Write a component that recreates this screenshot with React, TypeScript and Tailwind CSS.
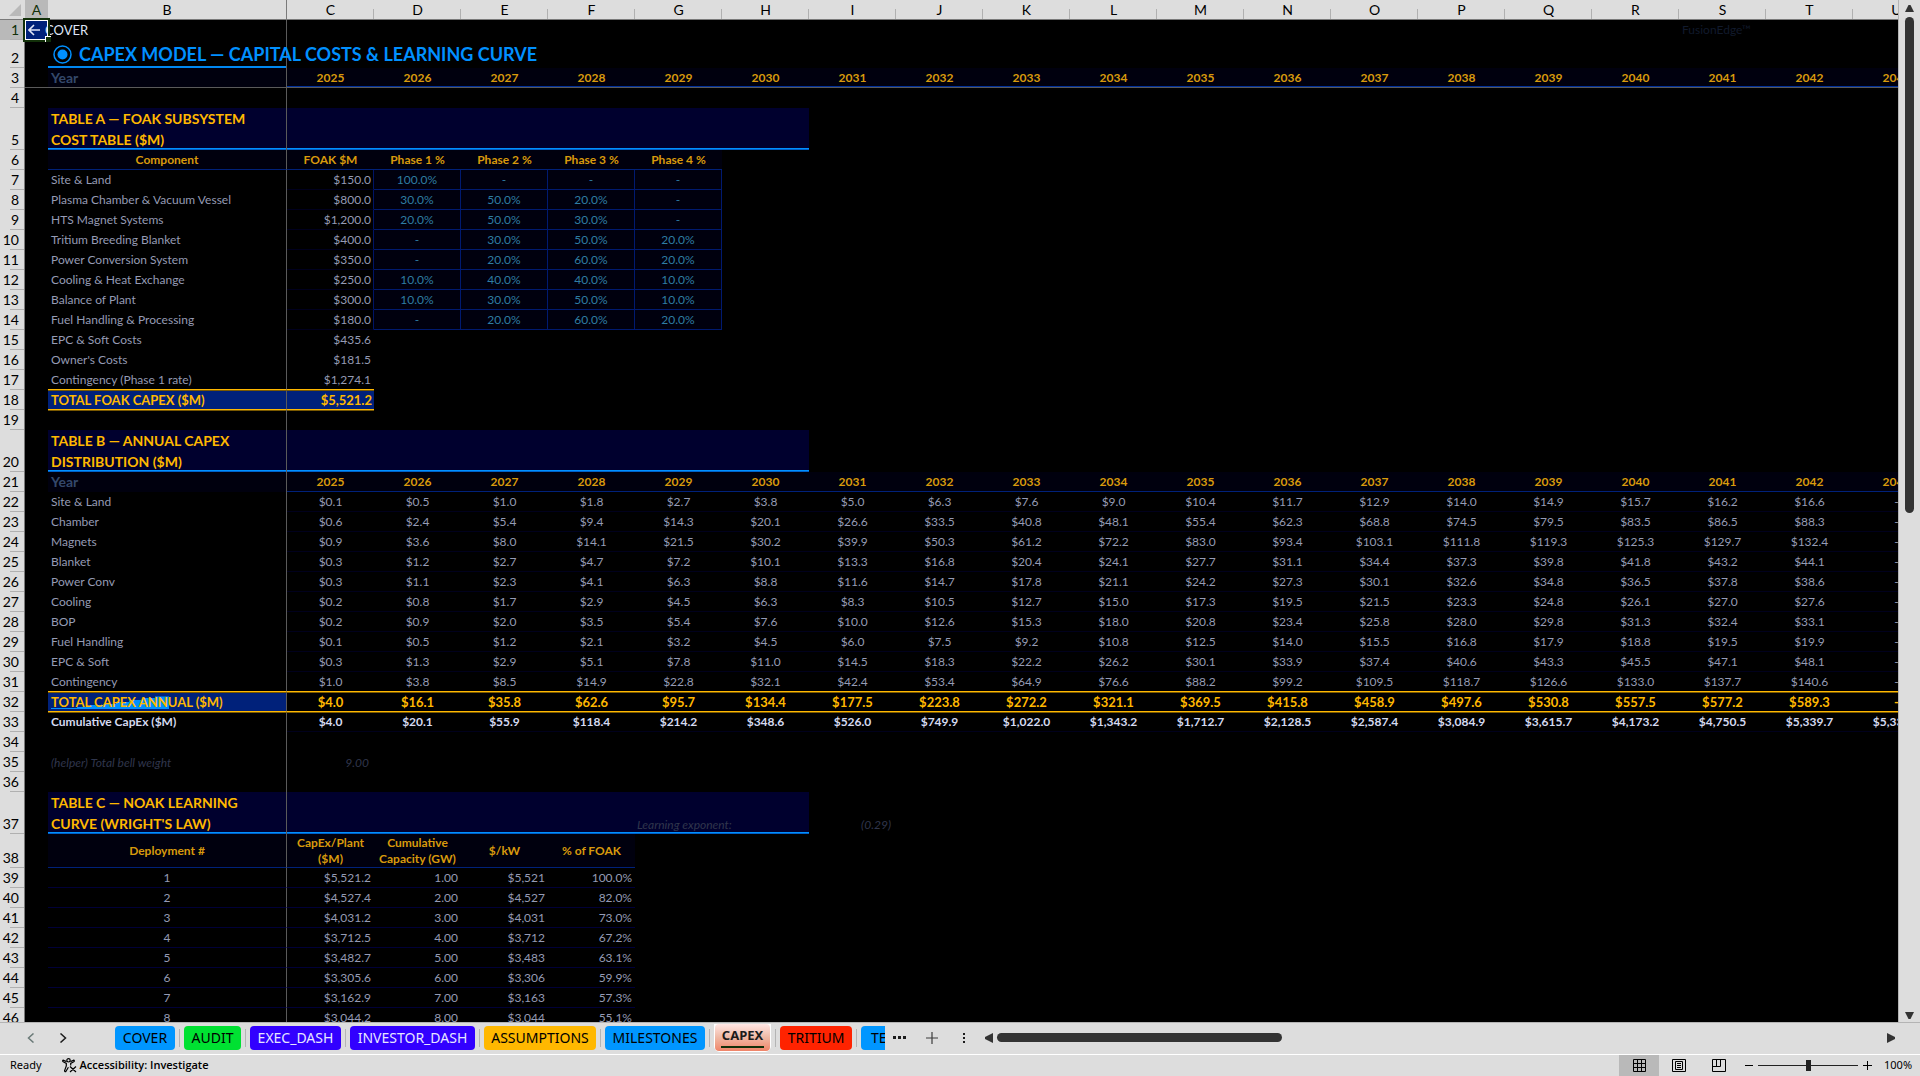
import React from 'react';

const columns = ['C', 'D', 'E', 'F', 'G', 'H', 'I', 'J', 'K', 'L', 'M', 'N', 'O', 'P', 'Q', 'R', 'S', 'T', 'U'];
const years = columns.map((_, i) => String(2025 + i));

const subsystems = [
  ['Site & Land', '$150.0', '100.0%', '-', '-', '-'],
  ['Plasma Chamber & Vacuum Vessel', '$800.0', '30.0%', '50.0%', '20.0%', '-'],
  ['HTS Magnet Systems', '$1,200.0', '20.0%', '50.0%', '30.0%', '-'],
  ['Tritium Breeding Blanket', '$400.0', '-', '30.0%', '50.0%', '20.0%'],
  ['Power Conversion System', '$350.0', '-', '20.0%', '60.0%', '20.0%'],
  ['Cooling & Heat Exchange', '$250.0', '10.0%', '40.0%', '40.0%', '10.0%'],
  ['Balance of Plant', '$300.0', '10.0%', '30.0%', '50.0%', '10.0%'],
  ['Fuel Handling & Processing', '$180.0', '-', '20.0%', '60.0%', '20.0%'],
];

const softCosts = [
  ['EPC & Soft Costs', '$435.6'],
  ["Owner's Costs", '$181.5'],
  ['Contingency (Phase 1 rate)', '$1,274.1'],
];

const annual = [
  { label: 'Site & Land', values: '0.1 0.5 1.0 1.8 2.7 3.8 5.0 6.3 7.6 9.0 10.4 11.7 12.9 14.0 14.9 15.7 16.2 16.6' },
  { label: 'Chamber', values: '0.6 2.4 5.4 9.4 14.3 20.1 26.6 33.5 40.8 48.1 55.4 62.3 68.8 74.5 79.5 83.5 86.5 88.3' },
  { label: 'Magnets', values: '0.9 3.6 8.0 14.1 21.5 30.2 39.9 50.3 61.2 72.2 83.0 93.4 103.1 111.8 119.3 125.3 129.7 132.4' },
  { label: 'Blanket', values: '0.3 1.2 2.7 4.7 7.2 10.1 13.3 16.8 20.4 24.1 27.7 31.1 34.4 37.3 39.8 41.8 43.2 44.1' },
  { label: 'Power Conv', values: '0.3 1.1 2.3 4.1 6.3 8.8 11.6 14.7 17.8 21.1 24.2 27.3 30.1 32.6 34.8 36.5 37.8 38.6' },
  { label: 'Cooling', values: '0.2 0.8 1.7 2.9 4.5 6.3 8.3 10.5 12.7 15.0 17.3 19.5 21.5 23.3 24.8 26.1 27.0 27.6' },
  { label: 'BOP', values: '0.2 0.9 2.0 3.5 5.4 7.6 10.0 12.6 15.3 18.0 20.8 23.4 25.8 28.0 29.8 31.3 32.4 33.1' },
  { label: 'Fuel Handling', values: '0.1 0.5 1.2 2.1 3.2 4.5 6.0 7.5 9.2 10.8 12.5 14.0 15.5 16.8 17.9 18.8 19.5 19.9' },
  { label: 'EPC & Soft', values: '0.3 1.3 2.9 5.1 7.8 11.0 14.5 18.3 22.2 26.2 30.1 33.9 37.4 40.6 43.3 45.5 47.1 48.1' },
  { label: 'Contingency', values: '1.0 3.8 8.5 14.9 22.8 32.1 42.4 53.4 64.9 76.6 88.2 99.2 109.5 118.7 126.6 133.0 137.7 140.6' },
];
const annualTotal = '4.0 16.1 35.8 62.6 95.7 134.4 177.5 223.8 272.2 321.1 369.5 415.8 458.9 497.6 530.8 557.5 577.2 589.3';
const cumulative =
  '4.0 20.1 55.9 118.4 214.2 348.6 526.0 749.9 1,022.0 1,343.2 1,712.7 2,128.5 2,587.4 3,084.9 3,615.7 4,173.2 4,750.5 5,339.7 5,339.7';

const deployments = [
  ['1', '$5,521.2', '1.00', '$5,521', '100.0%'],
  ['2', '$4,527.4', '2.00', '$4,527', '82.0%'],
  ['3', '$4,031.2', '3.00', '$4,031', '73.0%'],
  ['4', '$3,712.5', '4.00', '$3,712', '67.2%'],
  ['5', '$3,482.7', '5.00', '$3,483', '63.1%'],
  ['6', '$3,305.6', '6.00', '$3,306', '59.9%'],
  ['7', '$3,162.9', '7.00', '$3,163', '57.3%'],
  ['8', '$3,044.2', '8.00', '$3,044', '55.1%'],
];

const money = (values: string) => {
  const list = values.split(' ').map((v) => `$${v}`);
  return list.length < columns.length ? [...list, '-'] : list;
};

const labelCell = 'border-r border-r-[#5a5a5a] pl-[3px] text-left';
const bodyText = 'font-normal text-[#959bb4]';
const gold = 'font-bold text-[#ffb800]';
const headGold = 'font-bold text-[#d89a0c]';
const totalLine = 'border-y border-t-[#7a5900] border-b-[#ffb800] shadow-[0_1px_0_#7a5900]';

type RowProps = { n: number; height?: string; first?: React.ReactNode; children?: React.ReactNode };

const Row: React.FC<RowProps> = ({ n, height = 'h-5', first, children }) => (
  <tr className={height}>
    <th
      scope="row"
      className={`border-r border-[#7a7a7a] bg-[linear-gradient(#b0b0b0,#b0b0b0)] bg-[length:14px_1px] bg-right-bottom bg-no-repeat pr-[5px] text-right align-bottom text-[14px] leading-5 font-normal ${
        n === 1 ? 'bg-[#b9b9b9] text-[#123009]' : 'bg-[#dddddd] text-black'
      }`}
    >
      {n}
    </th>
    {first ?? <td />}
    {children}
  </tr>
);

const Blank = ({ span = 19 }: { span?: number }) => <td colSpan={span} />;

const EmptyRow = ({ n }: { n: number }) => (
  <Row n={n}>
    <td className={labelCell} />
    <Blank />
  </Row>
);

type SectionProps = { n: number; title: [string, string]; children?: React.ReactNode };

const sectionFill = 'bg-[#00002e] shadow-[inset_0_-1px_0_#0060c8,inset_0_-2px_0_#0090ff]';

const SectionRow = ({ n, title, children }: SectionProps) => (
  <Row n={n} height="h-[42px]">
    <th scope="rowgroup" className={`${labelCell} ${gold} ${sectionFill} text-[14px] leading-[21px]`}>
      {title[0]}
      <br />
      {title[1]}
    </th>
    {children ?? <td colSpan={6} className={sectionFill} />}
  </Row>
);

const Sheet: React.FC = () => (
  <table className="w-[1940px] table-fixed border-separate border-spacing-0 text-[12px] leading-[18px] whitespace-nowrap">
    <colgroup>
      <col className="w-[25px]" />
      <col className="w-[23px]" />
      <col className="w-[239px]" />
      {columns.map((c) => (
        <col key={c} className="w-[87px]" />
      ))}
    </colgroup>
    <thead>
      <tr className="h-5 bg-[#dddddd] text-[14px] text-black">
        <td className="border-b border-[#7a7a7a]">
          <svg className="ml-[9px]" width="12" height="12" viewBox="0 0 12 12">
            <path d="M12 0V12H0Z" fill="#b9b9b9" />
          </svg>
        </td>
        <th scope="col" className="border-b border-[#7a7a7a] bg-[#b9b9b9] font-normal text-[#123009]">A</th>
        <th scope="col" className="border-r border-b border-[#7a7a7a] font-normal">B</th>
        {columns.map((c) => (
          <th
            key={c}
            scope="col"
            className="border-b border-[#7a7a7a] bg-[linear-gradient(#b0b0b0,#b0b0b0)] bg-[length:1px_10px] bg-right-bottom bg-no-repeat font-normal"
          >
            {c}
          </th>
        ))}
      </tr>
    </thead>
    <tbody>
      <Row
        n={1}
        first={
          <td className="relative bg-[#00217a] outline-2 outline-[#123009] ring-1 ring-white ring-inset">
            <a href="#cover" className="flex items-center text-[13px] text-[#dfe4f5]">
              <svg className="mr-[5px] ml-[3px] shrink-0" width="12" height="12" viewBox="0 0 12 12" fill="none" stroke="currentColor" strokeWidth="1.6">
                <path d="M12 6H1M6 1L1 6L6 11" />
              </svg>
              <span>COVER</span>
            </a>
            <span className="absolute -right-[3px] -bottom-[2px] size-[6px] border-t border-l border-white bg-[#123009]" />
          </td>
        }
      >
        <td className={labelCell} />
        <Blank span={16} />
        <td className="pl-[3px] text-[#111a2c]">FusionEdge™</td>
        <Blank span={2} />
      </Row>
      <Row n={2} height="h-7">
        <td className={`${labelCell} shadow-[inset_0_-2px_0_#0087f0]`}>
          <h1 className="flex w-0 items-center gap-[7px] pl-[2px] text-[18px] leading-6 font-bold text-[#0090ff]">
            <svg className="shrink-0" width="19" height="19" viewBox="0 0 19 19" fill="none">
              <circle cx="9.5" cy="9.5" r="8.5" stroke="currentColor" strokeWidth="1.5" />
              <circle cx="9.5" cy="9.5" r="5" fill="currentColor" />
            </svg>
            CAPEX MODEL — CAPITAL COSTS &amp; LEARNING CURVE
          </h1>
        </td>
        <Blank />
      </Row>
      <Row n={3} first={<td className="border-b border-[#5a5a5a]" />}>
        <th scope="row" className={`${labelCell} border-b border-b-[#5a5a5a] bg-[#00000e] text-[14px] font-bold text-[#34486a]`}>Year</th>
        {years.map((y) => (
          <th key={y} scope="col" className={`${headGold} border-b border-[#5a5a5a] bg-[#00000e] shadow-[inset_0_-1px_0_#00309a]`}>
            {y}
          </th>
        ))}
      </Row>
      <EmptyRow n={4} />

      <SectionRow n={5} title={['TABLE A — FOAK SUBSYSTEM', 'COST TABLE ($M)']} />
      <Row n={6}>
        <th scope="col" className={`${headGold} border-r border-b border-r-[#5a5a5a] border-b-[#00217a] bg-[#00000e]`}>Component</th>
        {['FOAK $M', 'Phase 1 %', 'Phase 2 %', 'Phase 3 %', 'Phase 4 %'].map((h) => (
          <th key={h} scope="col" className={`${headGold} border-b border-[#00217a] bg-[#00000e]`}>{h}</th>
        ))}
      </Row>
      {subsystems.map(([name, cost, ...phases], i) => (
        <Row key={name} n={7 + i}>
          <th scope="row" className={`${labelCell} ${bodyText}`}>{name}</th>
          <td className={`${bodyText} border-r border-b border-r-[#001466] border-b-[#00001e] pr-[2px] text-right`}>{cost}</td>
          {phases.map((p, j) => (
            <td key={j} className="border-r border-b border-[#001a70] bg-[#00000e] text-center text-[#2f7da2]">{p}</td>
          ))}
        </Row>
      ))}
      {softCosts.map(([name, cost], i) => (
        <Row key={name} n={15 + i}>
          <th scope="row" className={`${labelCell} ${bodyText} ${i === 2 ? 'border-b border-b-[#ffb800]' : ''}`}>{name}</th>
          <td className={`${bodyText} pr-[3px] text-right ${i === 2 ? 'border-b border-b-[#ffb800]' : ''}`}>{cost}</td>
        </Row>
      ))}
      <Row n={18}>
        <th scope="row" className={`${labelCell} ${gold} ${totalLine} bg-[#00217a] text-[13px]`}>TOTAL FOAK CAPEX ($M)</th>
        <td className={`${gold} ${totalLine} bg-[#00217a] pr-[2px] text-right text-[13px]`}>$5,521.2</td>
      </Row>
      <EmptyRow n={19} />

      <SectionRow n={20} title={['TABLE B — ANNUAL CAPEX', 'DISTRIBUTION ($M)']} />
      <Row n={21}>
        <th scope="row" className={`${labelCell} bg-[#00000e] text-[14px] font-bold text-[#34486a]`}>Year</th>
        {years.map((y) => (
          <th key={y} scope="col" className={`${headGold} border-b border-[#00217a] bg-[#00000e]`}>{y}</th>
        ))}
      </Row>
      {annual.map(({ label, values }, i) => (
        <Row key={label} n={22 + i}>
          <th scope="row" className={`${labelCell} ${bodyText} ${i === 9 ? 'border-b border-b-[#ffb800]' : ''}`}>{label}</th>
          {money(values).map((v, j) => (
            <td key={j} className={`${bodyText} border-b text-center ${i === 9 ? 'border-[#ffb800]' : 'border-[#00001c]'}`}>{v}</td>
          ))}
        </Row>
      ))}
      <Row n={32}>
        <th scope="row" className={`${labelCell} ${gold} ${totalLine} relative bg-[#00217a] text-[13px]`}>
          {/* sparkline behind the label */}
          <svg className="absolute bottom-[2px] left-[3px]" width="118" height="13" viewBox="0 0 118 13" fill="#0090ff">
            <path d="M0 13V12H26V11H39V9H52V8H65V6H78V4H91V2H104V0.5H118V13Z" />
          </svg>
          <span className="relative">TOTAL CAPEX ANNUAL ($M)</span>
        </th>
        {money(annualTotal).map((v, j) => (
          <td key={j} className={`${gold} ${totalLine} text-center text-[13px]`}>{v}</td>
        ))}
      </Row>
      <Row n={33}>
        <th scope="row" className={`${labelCell} font-bold text-[#d5daf0]`}>Cumulative CapEx ($M)</th>
        {money(cumulative).map((v, j) => (
          <td key={j} className="border-b border-[#00001c] text-center font-bold text-[#d5daf0]">{v}</td>
        ))}
      </Row>
      <EmptyRow n={34} />
      <Row n={35}>
        <th scope="row" className={`${labelCell} align-bottom font-normal text-[#30364c] italic`}>(helper) Total bell weight</th>
        <td className="pr-[5px] text-right align-bottom text-[#30364c] italic">9.00</td>
      </Row>
      <EmptyRow n={36} />

      <SectionRow n={37} title={['TABLE C — NOAK LEARNING', "CURVE (WRIGHT'S LAW)"]}>
        <td colSpan={4} className={sectionFill} />
        <td className={`${sectionFill} pl-[2px] align-bottom text-[#30364c] italic`}>Learning exponent:</td>
        <td className={sectionFill} />
        <td className="pr-[5px] text-right align-bottom text-[#30364c] italic">(0.29)</td>
      </SectionRow>
      <Row n={38} height="h-[34px]">
        <th scope="col" className={`${headGold} border-r border-b border-r-[#5a5a5a] border-b-[#00217a] bg-[#00000e]`}>Deployment #</th>
        {['CapEx/Plant ($M)', 'Cumulative Capacity (GW)', '$/kW', '% of FOAK'].map((h) => (
          <th key={h} scope="col" className={`${headGold} border-b border-[#00217a] bg-[#00000e] leading-4 whitespace-normal`}>{h}</th>
        ))}
      </Row>
      {deployments.map(([num, ...cells], i) => (
        <Row key={num} n={39 + i}>
          <th scope="row" className={`${bodyText} border-r border-b border-r-[#5a5a5a] border-b-[#000038]`}>{num}</th>
          {cells.map((v, j) => (
            <td key={j} className={`${bodyText} border-b border-[#000038] pr-[3px] text-right`}>{v}</td>
          ))}
        </Row>
      ))}
    </tbody>
  </table>
);

const tabs = [
  { name: 'COVER', className: 'w-[60px] bg-[#0096ff] text-black' },
  { name: 'AUDIT', className: 'w-[57px] bg-[#00e132] text-black' },
  { name: 'EXEC_DASH', className: 'w-[91px] bg-[#3200ff] text-[#e6e6ff]' },
  { name: 'INVESTOR_DASH', className: 'w-[125px] bg-[#3200ff] text-[#e6e6ff]' },
  { name: 'ASSUMPTIONS', className: 'w-[112px] bg-[#ffb800] text-black' },
  { name: 'MILESTONES', className: 'w-[100px] bg-[#0096ff] text-black' },
  { name: 'CAPEX', className: '' },
  { name: 'TRITIUM', className: 'w-[72px] bg-[#ff2300] text-black' },
];

const TabBar = () => (
  <div className="flex h-8 shrink-0 items-center border-t border-[#b4b4b4] pb-[2px] font-['Noto_Sans',sans-serif]">
    <button aria-label="Previous sheets" className="ml-[27px] text-[#6b7a78]">
      <svg width="8" height="10" viewBox="0 0 8 10" fill="none" stroke="currentColor" strokeWidth="1.5">
        <path d="M6.5 0.5L1.5 5L6.5 9.5" />
      </svg>
    </button>
    <button aria-label="Next sheets" className="ml-6 text-[#1c1c1c]">
      <svg width="8" height="10" viewBox="0 0 8 10" fill="none" stroke="currentColor" strokeWidth="1.5">
        <path d="M1.5 0.5L6.5 5L1.5 9.5" />
      </svg>
    </button>
    <nav className="ml-12 flex w-[770px] shrink-0 items-center gap-1 overflow-hidden text-[14px] leading-6">
      {tabs.map(({ name, className }) => (
        <React.Fragment key={name}>
          {name === 'CAPEX' ? (
            <button className="h-7 w-[57px] shrink-0 rounded-b-md bg-white px-px pb-px">
              <span className="flex h-full flex-col items-center rounded-[4px] bg-linear-to-b from-[#ffe6e4] via-[#efb8a4] to-[#ef8468] text-[13px] leading-[22px] font-bold text-[#1c1c1c]">
                CAPEX
                <span className="h-[2px] w-[43px] bg-[#123009]" />
              </span>
            </button>
          ) : (
            <button className={`h-6 shrink-0 rounded-[4px] text-center ${className}`}>{name}</button>
          )}
          <span className="h-[18px] w-px shrink-0 bg-[#b4b4b4]" />
        </React.Fragment>
      ))}
      <button className="h-6 w-[60px] shrink-0 rounded-[4px] bg-[#0096ff] pl-[10px] text-left text-black">TEA</button>
    </nav>
    <button aria-label="More sheets" className="ml-2 flex gap-[2px]">
      <span className="size-[3px] bg-[#1c1c1c]" />
      <span className="size-[3px] bg-[#1c1c1c]" />
      <span className="size-[3px] bg-[#1c1c1c]" />
    </button>
    <button aria-label="New sheet" className="ml-5 text-[#3c3c3c]">
      <svg width="12" height="12" viewBox="0 0 12 12" stroke="currentColor" strokeWidth="1.2">
        <path d="M6 0V12M0 6H12" />
      </svg>
    </button>
    <button aria-label="Resize tabs" className="ml-[25px] flex flex-col gap-[2px]">
      <span className="size-[2px] bg-[#1c1c1c]" />
      <span className="size-[2px] bg-[#1c1c1c]" />
      <span className="size-[2px] bg-[#1c1c1c]" />
    </button>
    <div className="mr-[25px] ml-5 flex min-w-0 flex-1 items-center justify-between text-[#333333]">
      <div className="flex items-center gap-1">
        <svg width="8" height="10" viewBox="0 0 8 10" fill="currentColor">
          <path d="M8 0V10L0 6V4Z" />
        </svg>
        <span className="h-[9px] w-[285px] rounded-full bg-[#333333]" />
      </div>
      <svg width="8" height="10" viewBox="0 0 8 10" fill="currentColor">
        <path d="M0 0V10L8 6V4Z" />
      </svg>
    </div>
  </div>
);

const StatusBar = () => (
  <footer className="flex h-[22px] shrink-0 items-center border-t border-white font-['Noto_Sans',sans-serif] text-[11px] text-black">
    <span className="ml-[10px]">Ready</span>
    <button className="ml-5 flex items-center gap-[3px] font-['Open_Sans',sans-serif] font-semibold">
      <svg width="15" height="15" viewBox="0 0 15 15" fill="none" stroke="currentColor" strokeWidth="1.2">
        <circle cx="6.5" cy="2.3" r="1.7" />
        <path d="M4.6 3.6L1.5 2.2C0.6 2 0.4 3.4 1.2 3.8L4.3 5.4V8L2.6 12.6C2.5 13.8 3.6 14 4 13.2L6.4 9.2M8.4 3.6L11.5 2.2C12.4 2 12.6 3.4 11.8 3.8L8.7 5.4V7.4M8 8.5L14 14M14 8.5L8 14" />
      </svg>
      Accessibility: Investigate
    </button>
    <div className="ml-auto flex h-full items-center">
      <button aria-label="Normal view" className="flex h-full w-10 items-center justify-center bg-[#b9b9b9]">
        <svg width="13" height="13" viewBox="0 0 13 13" fill="none" stroke="currentColor">
          <path d="M0.5 0.5H12.5V12.5H0.5ZM4.5 0.5V12.5M8.5 0.5V12.5M0.5 4.5H12.5M0.5 8.5H12.5" />
        </svg>
      </button>
      <button aria-label="Page layout view" className="flex w-10 justify-center">
        <svg width="14" height="13" viewBox="0 0 14 13" fill="none" stroke="currentColor">
          <path d="M0.5 0.5H13.5V12.5H0.5ZM3.5 2.5H10.5V10.5H3.5ZM5 4.5H9M5 6.5H9M5 8.5H9" />
        </svg>
      </button>
      <button aria-label="Page break preview" className="flex w-10 justify-center">
        <svg width="14" height="13" viewBox="0 0 14 13" fill="none" stroke="currentColor">
          <path d="M0.5 0.5H13.5V12.5H0.5ZM0.5 7.5H8.5V0.5M4.5 0.5V7.5" />
        </svg>
      </button>
      <button aria-label="Zoom out" className="ml-[6px]">
        <svg width="8" height="9" viewBox="0 0 8 9" stroke="currentColor">
          <path d="M0 4.5H8" />
        </svg>
      </button>
      <input
        type="range"
        aria-label="Zoom"
        defaultValue={50}
        className="mx-[5px] h-[11px] w-[100px] appearance-none bg-[linear-gradient(#222222,#222222)] bg-[length:100%_1px] bg-center bg-no-repeat [&::-webkit-slider-thumb]:h-[11px] [&::-webkit-slider-thumb]:w-[5px] [&::-webkit-slider-thumb]:appearance-none [&::-webkit-slider-thumb]:bg-[#222222]"
      />
      <button aria-label="Zoom in">
        <svg width="9" height="9" viewBox="0 0 9 9" stroke="currentColor">
          <path d="M0 4.5H9M4.5 0V9" />
        </svg>
      </button>
      <button className="mr-2 ml-3 w-7 text-right">100%</button>
    </div>
  </footer>
);

export default function App() {
  return (
    <div className="flex h-screen flex-col bg-[#dddddd] font-['Lato',sans-serif]">
      <main className="flex min-h-0 flex-1">
        <div className="min-w-0 flex-1 overflow-hidden bg-black">
          <Sheet />
        </div>
        <div className="flex w-[22px] flex-col items-center border-l border-[#b4b4b4] pt-[5px] pb-[3px]">
          <svg width="9" height="7" viewBox="0 0 9 7" fill="#333333">
            <path d="M0 7H9L5.5 0H3.5Z" />
          </svg>
          <span className="mt-[5px] h-[496px] w-[9px] rounded-full bg-[#333333]" />
          <svg className="mt-auto" width="9" height="7" viewBox="0 0 9 7" fill="#333333">
            <path d="M0 0H9L5.5 7H3.5Z" />
          </svg>
        </div>
      </main>
      <TabBar />
      <StatusBar />
    </div>
  );
}
